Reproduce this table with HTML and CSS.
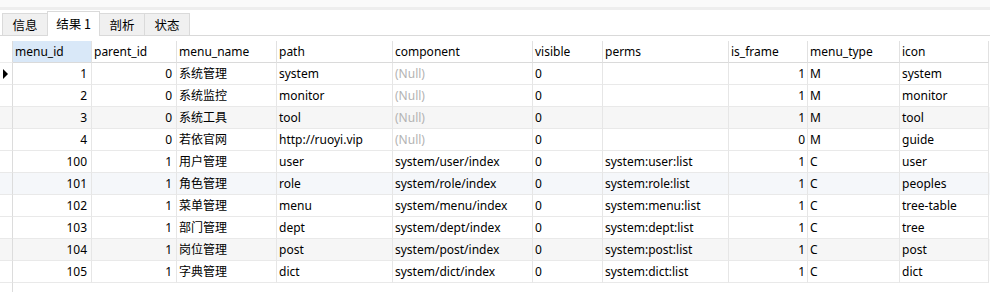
FILE: index.html
```html
<!DOCTYPE html>
<html lang="zh-CN">
<head>
<meta charset="utf-8">
<title>结果 1</title>
<link rel="stylesheet" href="styles.css">
</head>
<body>
<div class="topbar"></div>
<div class="tabbar">
  <div class="tab">信息</div>
  <div class="tab active">结果 1</div>
  <div class="tab">剖析</div>
  <div class="tab">状态</div>
</div>
<div class="grid">
  <div class="row head">
    <div class="c ind"></div>
    <div class="c sel">menu_id</div>
    <div class="c">parent_id</div>
    <div class="c">menu_name</div>
    <div class="c">path</div>
    <div class="c">component</div>
    <div class="c">visible</div>
    <div class="c">perms</div>
    <div class="c">is_frame</div>
    <div class="c">menu_type</div>
    <div class="c">icon</div>
  </div>
  <div class="row">
    <div class="c ind"><span class="cursor"></span></div>
    <div class="c num">1</div><div class="c num">0</div><div class="c">系统管理</div><div class="c">system</div>
    <div class="c null">(Null)</div><div class="c">0</div><div class="c"></div><div class="c num fr">1</div><div class="c">M</div><div class="c">system</div>
  </div>
  <div class="row">
    <div class="c ind"></div>
    <div class="c num">2</div><div class="c num">0</div><div class="c">系统监控</div><div class="c">monitor</div>
    <div class="c null">(Null)</div><div class="c">0</div><div class="c"></div><div class="c num fr">1</div><div class="c">M</div><div class="c">monitor</div>
  </div>
  <div class="row shade">
    <div class="c ind"></div>
    <div class="c num">3</div><div class="c num">0</div><div class="c">系统工具</div><div class="c">tool</div>
    <div class="c null">(Null)</div><div class="c">0</div><div class="c"></div><div class="c num fr">1</div><div class="c">M</div><div class="c">tool</div>
  </div>
  <div class="row">
    <div class="c ind"></div>
    <div class="c num">4</div><div class="c num">0</div><div class="c">若依官网</div><div class="c">http://ruoyi.vip</div>
    <div class="c null">(Null)</div><div class="c">0</div><div class="c"></div><div class="c num fr">0</div><div class="c">M</div><div class="c">guide</div>
  </div>
  <div class="row">
    <div class="c ind"></div>
    <div class="c num">100</div><div class="c num">1</div><div class="c">用户管理</div><div class="c">user</div>
    <div class="c">system/user/index</div><div class="c">0</div><div class="c">system:user:list</div><div class="c num fr">1</div><div class="c">C</div><div class="c">user</div>
  </div>
  <div class="row tint">
    <div class="c ind"></div>
    <div class="c num">101</div><div class="c num">1</div><div class="c">角色管理</div><div class="c">role</div>
    <div class="c">system/role/index</div><div class="c">0</div><div class="c">system:role:list</div><div class="c num fr">1</div><div class="c">C</div><div class="c">peoples</div>
  </div>
  <div class="row">
    <div class="c ind"></div>
    <div class="c num">102</div><div class="c num">1</div><div class="c">菜单管理</div><div class="c">menu</div>
    <div class="c">system/menu/index</div><div class="c">0</div><div class="c">system:menu:list</div><div class="c num fr">1</div><div class="c">C</div><div class="c">tree-table</div>
  </div>
  <div class="row">
    <div class="c ind"></div>
    <div class="c num">103</div><div class="c num">1</div><div class="c">部门管理</div><div class="c">dept</div>
    <div class="c">system/dept/index</div><div class="c">0</div><div class="c">system:dept:list</div><div class="c num fr">1</div><div class="c">C</div><div class="c">tree</div>
  </div>
  <div class="row shade">
    <div class="c ind"></div>
    <div class="c num">104</div><div class="c num">1</div><div class="c">岗位管理</div><div class="c">post</div>
    <div class="c">system/post/index</div><div class="c">0</div><div class="c">system:post:list</div><div class="c num fr">1</div><div class="c">C</div><div class="c">post</div>
  </div>
  <div class="row">
    <div class="c ind"></div>
    <div class="c num">105</div><div class="c num">1</div><div class="c">字典管理</div><div class="c">dict</div>
    <div class="c">system/dict/index</div><div class="c">0</div><div class="c">system:dict:list</div><div class="c num fr">1</div><div class="c">C</div><div class="c">dict</div>
  </div>
  <div class="tail"></div>
</div>
</body>
</html>
```
FILE: styles.css
```css
* { box-sizing: border-box; }
html, body { margin: 0; padding: 0; background: #fff; }
body {
  width: 990px;
  height: 293px;
  overflow: hidden;
  font-family: "Noto Sans", "Noto Sans CJK SC", sans-serif;
  font-size: 12px;
  color: #000;
}
.topbar {
  height: 10px;
  background: #fafafa;
  border-bottom: 3px solid #eeeeee;
}
.tabbar {
  height: 26px;
  display: flex;
  align-items: flex-end;
  padding-left: 2px;
  border-bottom: 1px solid #d9d9d9;
  background: #fff;
}
.tab {
  width: 46px;
  height: 22px;
  background: #f0f0f0;
  border: 1px solid #dadada;
  border-bottom: none;
  margin-right: -1px;
  text-align: center;
  line-height: 21px;
  font-family: "Noto Sans CJK SC", sans-serif;
  font-size: 12.5px;
}
.tab.active {
  width: 53px;
  height: 25px;
  background: #fff;
  margin-bottom: -1px;
  line-height: 24px;
  position: relative;
  z-index: 1;
}
.grid {
  margin-top: 5px;
}
.row {
  display: grid;
  grid-template-columns: 13px 79px 85px 100px 116px 140px 70px 126px 79px 92px 89px;
  height: 22px;
}
.row.shade { background: #f6f6f6; }
.row.tint { background: #f5f7fa; }
.c {
  border-right: 1px solid #e6e6e6;
  border-bottom: 1px solid #e9e9e9;
  padding: 0 4px 0 2px;
  line-height: 21px;
  white-space: nowrap;
  overflow: hidden;
}
.head .c {
  border-right-color: #e1e1e1;
  border-bottom-color: #dadada;
}
.head .sel { background: #d9e8f8; }
.c.num { text-align: right; }
.c.fr { padding-right: 2px; }
.c.null { color: #b3b3b3; }
.c.ind {
  padding: 0;
  position: relative;
  border-right-color: #dcdcdc;
}
.head .c.ind { border-bottom-color: #ececec; }
.cursor {
  position: absolute;
  left: 3px;
  top: 6px;
  width: 0;
  height: 0;
  border-top: 5px solid transparent;
  border-bottom: 5px solid transparent;
  border-left: 5px solid #000;
}
.tail {
  width: 13px;
  height: 9px;
  border-right: 1px solid #dcdcdc;
}
```
